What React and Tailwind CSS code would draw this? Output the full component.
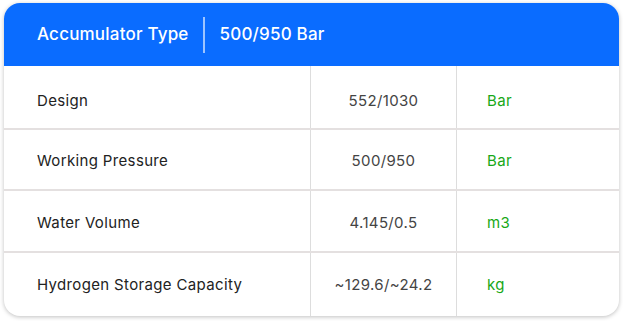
export default function App() {
  const rows = [
    ["Design", "552/1030", "Bar", "h-[62px]", "pt-[8px]"],
    ["Working Pressure", "500/950", "Bar", "h-[61px]", "pt-[3px]"],
    ["Water Volume", "4.145/0.5", "m3", "h-[62px]", "pt-[4px]"],
    ["Hydrogen Storage Capacity", "~129.6/~24.2", "kg", "flex-1", "pt-[1px]"],
  ];
  return (
    <div className="w-[623px] h-[321px] bg-white pt-[3px] pl-[4px]" style={{ fontFamily: "Inter, 'Noto Sans', sans-serif" }}>
      <div className="w-[615px] h-[313px] rounded-[16px] bg-white shadow-[0_1px_4px_rgba(0,0,0,0.25)] overflow-hidden flex flex-col">
        <div className="h-[63px] bg-[#0a6cff] flex items-center text-white text-[17px] font-medium tracking-[0.2px]">
          <div className="pl-[33px] pr-[14px]">Accumulator Type</div>
          <div className="w-[2px] h-[36px] bg-white/60"></div>
          <div className="pl-[15px]">500/950 Bar</div>
        </div>
        <div className="flex-1 flex flex-col">
          {rows.map((r, i) => (
            <div key={i} className={`${r[3]} flex text-[15px] tracking-[0.35px] ${i > 0 ? "border-t-2 border-[#e4e0e0]" : ""}`}>
              <div className={`w-[307px] flex items-center ${r[4]} pl-[33px] text-[#222] border-r border-[#ddd]`}>{r[0]}</div>
              <div className={`w-[146px] flex items-center justify-center ${r[4]} text-[#444] border-r border-[#ddd]`}>{r[1]}</div>
              <div className={`flex-1 flex items-center ${r[4]} pl-[30px] text-[#17a817]`}>{r[2]}</div>
            </div>
          ))}
        </div>
      </div>
    </div>
  );
}
